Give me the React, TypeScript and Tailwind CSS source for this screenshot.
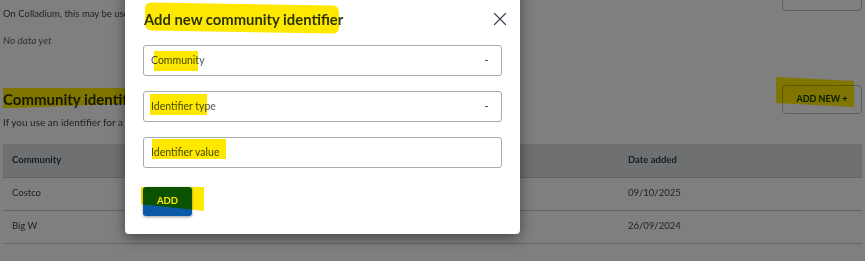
import { X } from "lucide-react";

const rows = [
  { community: "Costco", date: "09/10/2025" },
  { community: "Big W", date: "26/09/2024" },
];

function Field({ label, select, mark }: { label: string; select?: boolean; mark: string }) {
  return (
    <div className="relative flex h-[31px] items-center justify-between rounded-[3px] border border-[#a3abb3] px-[7px]">
      <span className="text-[10.5px] text-[#46525c]">{label}</span>
      {select && <span className="mr-[6px] h-[1.5px] w-[3px] bg-[#46525c]" />}
      <span className={`pointer-events-none absolute bg-[#ffe800] mix-blend-multiply ${mark}`} />
    </div>
  );
}

export default function App() {
  return (
    <div className="relative h-[261px] w-full overflow-hidden bg-white font-['Lato',sans-serif] text-[#2c3a42]">
      {/* page underneath */}
      <div className="-mt-[19px] px-[3px]">
        <div className="flex justify-end">
          <button className="h-[30px] w-[80px] rounded-[4px] border border-[#b9bec4] text-[10px] font-bold text-[#0b5cab]">
            ADD NEW +
          </button>
        </div>
        <p className="mt-[-4px] w-[122px] overflow-hidden whitespace-nowrap text-[9.5px] text-[#3c4850]">On Colladium, this may be used to identify you.</p>
        <p className="mt-[12px] text-[10px] italic text-[#5a646c]">No data yet</p>

        <div className="mt-[36px] flex items-end justify-between">
          <h2 className="relative mb-[4px] w-[122px] overflow-hidden whitespace-nowrap text-[15px] font-bold leading-[22px]">
            <span className="absolute left-0 top-[-4px] h-[22px] w-[125px] -skew-y-2 bg-[#ffea00] mix-blend-multiply" />
            Community identifiers
          </h2>
          <div className="relative">
            <span className="absolute left-[-6px] top-[-5px] h-[26px] w-[78px] skew-y-3 bg-[#ffea00] mix-blend-multiply" />
            <button className="h-[29px] w-[80px] rounded-[4px] border border-[#b9bec4] text-[9px] font-bold text-[#0b3f78]">
              ADD NEW +
            </button>
          </div>
        </div>
        <p className="mt-[1px] w-[122px] overflow-hidden whitespace-nowrap text-[10px] text-[#3c4850]">If you use an identifier for a shop, add it here.</p>

        <div className="mt-[14px] text-[9.5px]">
          <div className="grid h-[34px] grid-cols-[616px_1fr] items-center border-b border-[#c4c8cc] bg-[#dfe1e3] px-[9px] font-bold">
            <span>Community</span>
            <span>Date added</span>
          </div>
          {rows.map((r) => (
            <div key={r.community} className="grid h-[33px] grid-cols-[616px_1fr] items-center border-b border-[#c4c8cc] px-[9px] text-[#3c4850]">
              <span>{r.community}</span>
              <span>{r.date}</span>
            </div>
          ))}
        </div>
      </div>

      {/* overlay */}
      <div className="absolute inset-0 bg-black/50" />

      {/* dialog */}
      <div className="absolute left-[125px] top-[-12px] w-[395px] rounded-[4px] bg-white px-[18px] pb-[18px] pt-[19px] shadow-[0_4px_14px_rgba(0,0,0,0.45)]">
        <div className="flex items-center justify-between">
          <h1 className="relative ml-[1px] text-[14.8px] font-bold leading-[24px] text-[#2c3a42]">
            Add new community identifier
            <span className="pointer-events-none absolute left-[1px] top-[-3px] h-[28px] w-[194px] rounded-[6px] skew-y-1 bg-[#ffe800] mix-blend-multiply" />
          </h1>
          <button className="mr-[-9px] text-[#3b4650]">
            <X size={22} strokeWidth={1.3} />
          </button>
        </div>

        <div className="mt-[14px] flex flex-col gap-[15px]">
          <Field label="Community" select mark="left-[10px] top-[5px] h-[20px] w-[44px]" />
          <Field label="Identifier type" select mark="left-[6px] top-[2px] h-[21px] w-[57px]" />
          <Field label="Identifier value" mark="left-[8px] top-[1px] h-[20px] w-[74px]" />
        </div>

        <div className="relative mt-[18px]">
          <button className="h-[29px] w-[49px] rounded-[3px] bg-[#0a5aa8] text-[9.5px] font-bold text-white shadow-[0_1px_3px_rgba(0,0,0,0.4)]">
            ADD
          </button>
          <span
            className="pointer-events-none absolute left-[-2px] top-[1px] h-[24px] w-[63px] bg-[#ffe800] mix-blend-multiply"
            style={{ clipPath: "polygon(0 0, 100% 0, 100% 100%, 80% 94%, 0 72%)" }}
          />
        </div>
      </div>
    </div>
  );
}
